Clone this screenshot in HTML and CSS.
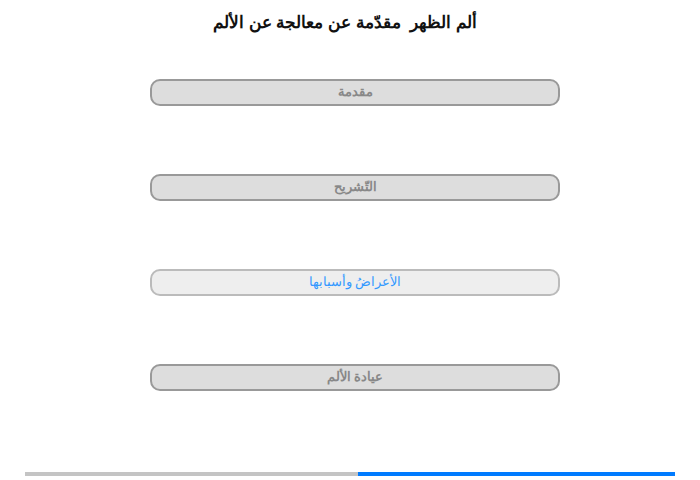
FILE: index.html
```html
<!DOCTYPE html>
<html lang="ar" dir="rtl">
<head>
    <meta charset="UTF-8">
    <meta name="viewport" content="width=device-width, initial-scale=1.0">
    <title>ألم الظهر</title>
    <link rel="stylesheet" href="styles.css">
</head>
<body>
    <div class="page">
        <h1 class="title">ألم الظهر&nbsp; مقدّمة عن معالجة عن الألم</h1>

        <div class="menu">
            <button class="menu-item">مقدمة</button>
            <button class="menu-item">التّشريح</button>
            <button class="menu-item active">الأعراضُ وأسبابها</button>
            <button class="menu-item">عيادة الألم</button>
        </div>

        <div class="progress">
            <div class="progress-done" style="width: 51.3%"></div>
        </div>
    </div>
</body>
</html>
```

FILE: styles.css
```css
body {
    margin: 0;
    font-family: "Liberation Sans", Arial, sans-serif;
    background: #fff;
}

.page {
    width: 700px;
    height: 480px;
    display: flex;
    flex-direction: column;
}

.title {
    margin: 0;
    height: 45px;
    line-height: 45px;
    font-size: 17px;
    font-weight: bold;
    color: #111;
    text-align: center;
    padding-right: 10px;
    box-sizing: border-box;
}

.menu {
    display: flex;
    flex-direction: column;
    align-items: center;
    gap: 68px;
    margin-top: 34px;
    padding-left: 10px;
}

.menu-item {
    width: 410px;
    height: 27px;
    box-sizing: border-box;
    border: 2px solid #999;
    border-radius: 10px;
    background-color: #ddd;
    color: #888;
    font-family: "Liberation Sans", Arial, sans-serif;
    font-size: 13px;
    font-weight: bold;
    padding: 0 0 2px;
    cursor: pointer;
}

.menu-item.active {
    border-color: #bbb;
    background-color: #eee;
    color: #3399ff;
    font-weight: normal;
}

.progress {
    margin: auto 25px 4px;
    height: 4px;
    background-color: #007bff;
    display: flex;
    flex-direction: row-reverse;
}

.progress-done {
    height: 100%;
    background-color: #c4c4c4;
}
```
